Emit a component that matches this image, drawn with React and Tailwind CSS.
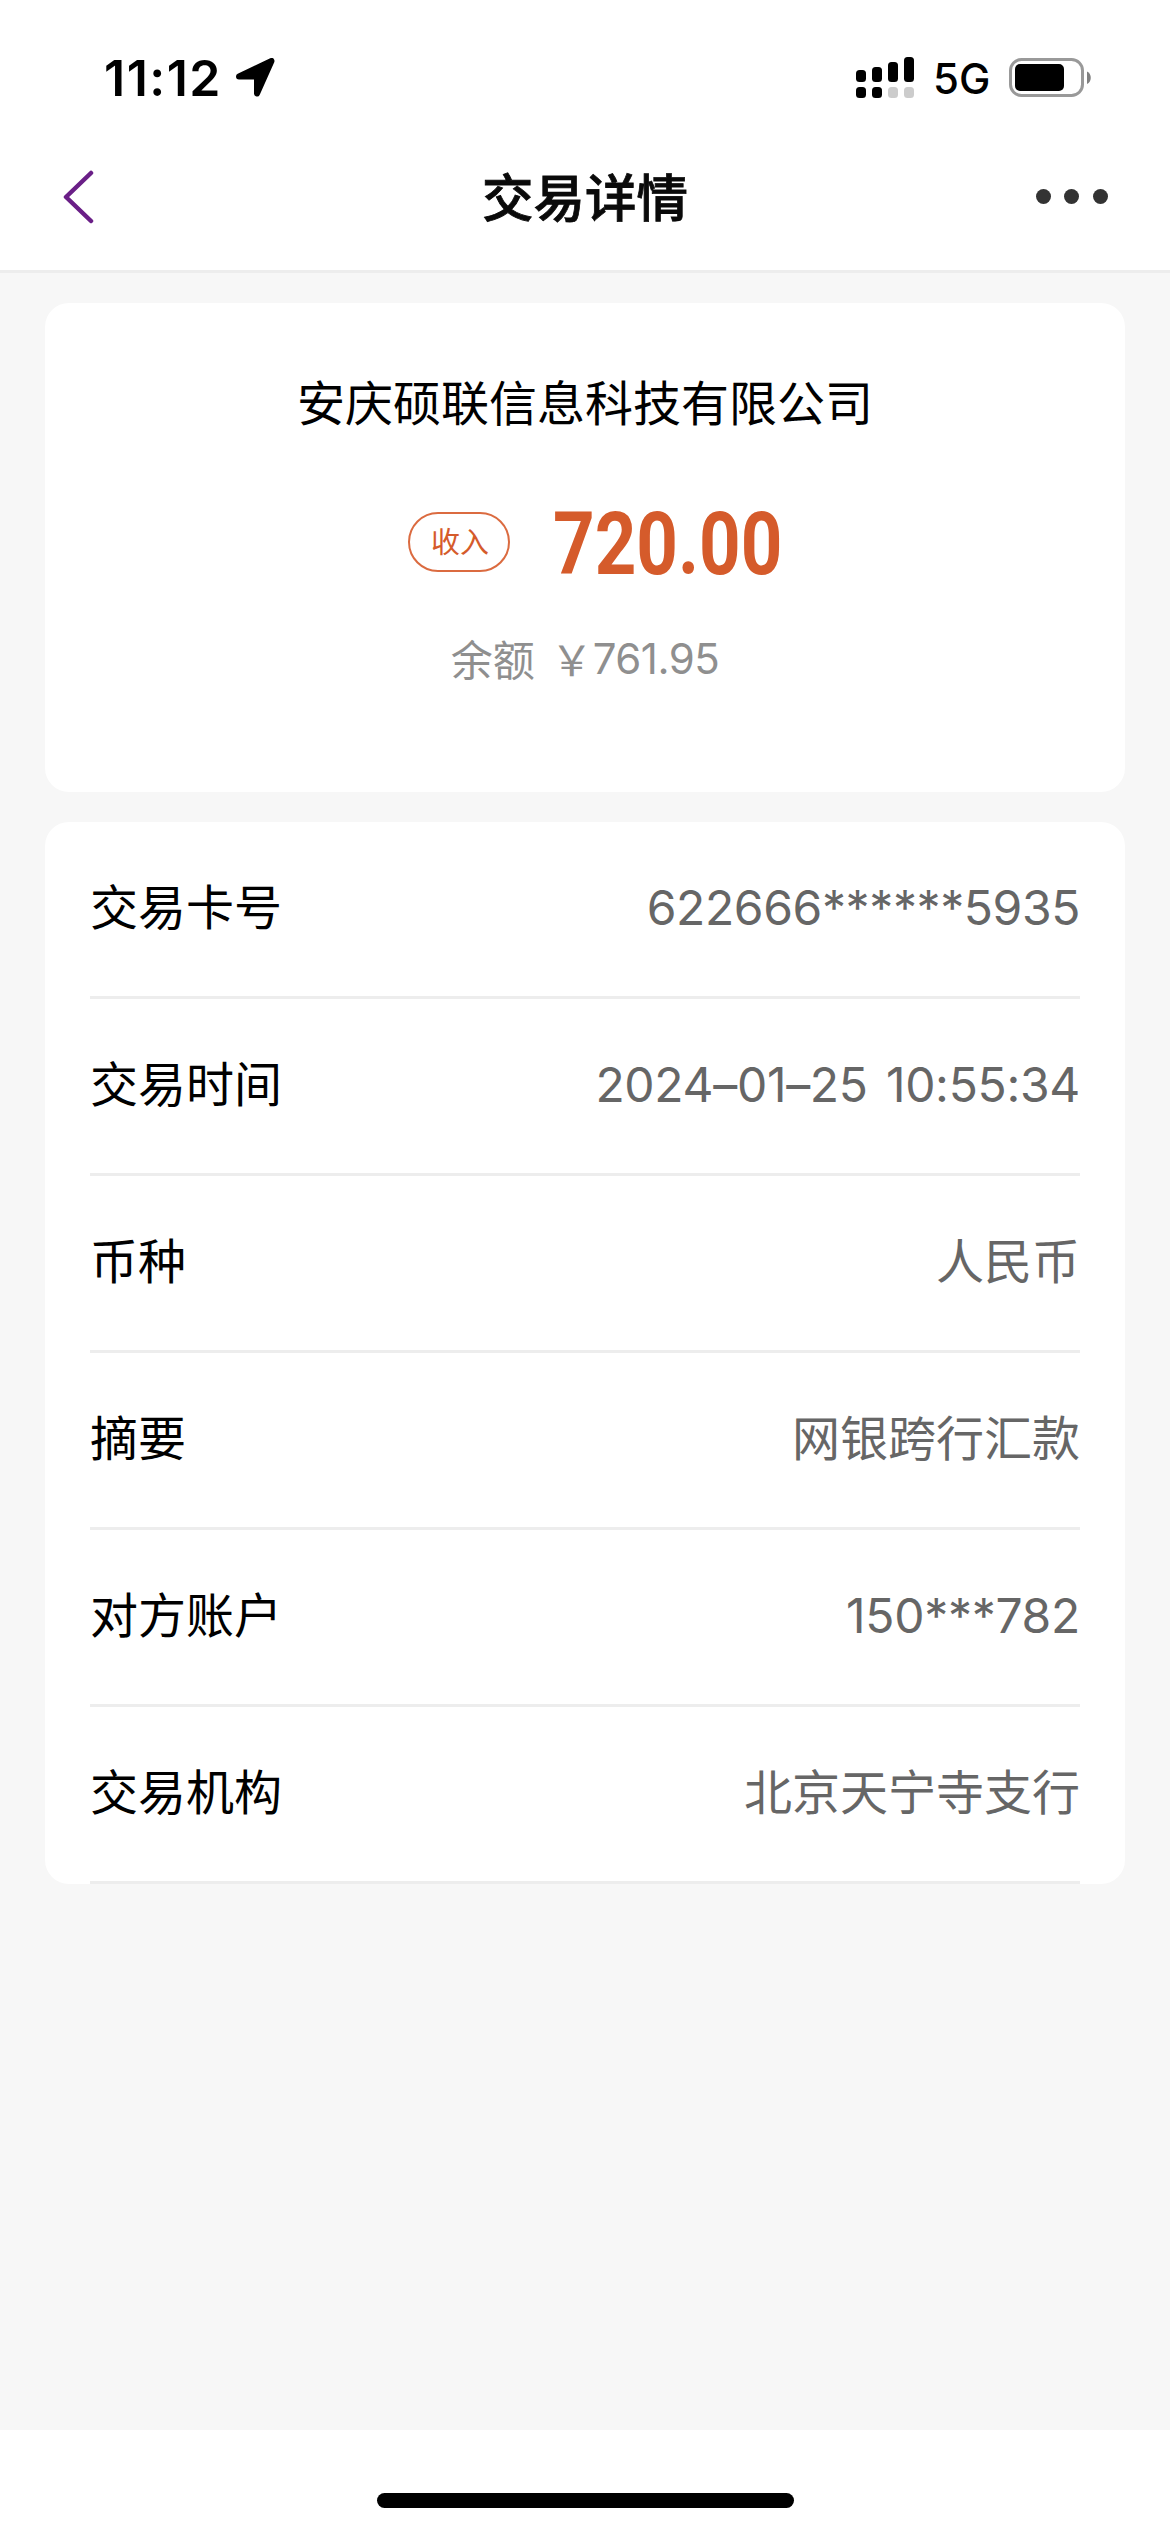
import React from 'react';

const rows = [
  { label: '交易卡号', value: '622666******5935', latin: 'tracking-[-0.4px]' },
  { label: '交易时间', value: '2024–01–25 10:55:34', latin: 'tracking-[-0.3px] [word-spacing:5px]' },
  { label: '币种', value: '人民币' },
  { label: '摘要', value: '网银跨行汇款' },
  { label: '对方账户', value: '150***782', latin: 'tracking-[-0.3px]' },
  { label: '交易机构', value: '北京天宁寺支行' }
];

const LocationIcon = () => (
  <svg className="ml-[14px] h-[39px] w-[39px]" viewBox="0 0 39 39">
    <path
      d="M3 18.5 35.5 3 21 35.5V18.5Z"
      fill="#000"
      stroke="#000"
      strokeWidth="6"
      strokeLinejoin="round"
    />
  </svg>
);

// Dual SIM signal: bars for the main line, dots for the second one
const SignalIcon = () => (
  <svg className="h-[41px] w-[58px]" viewBox="0 0 58 41">
    <rect x="0" y="13" width="10" height="12" rx="3.5" />
    <rect x="16" y="10" width="10" height="15" rx="3.5" />
    <rect x="32" y="5" width="10" height="20" rx="3.5" />
    <rect x="48" y="0" width="10" height="25" rx="3.5" />
    <rect x="0" y="30" width="10" height="11" rx="3.5" />
    <rect x="16" y="30" width="10" height="11" rx="3.5" />
    <rect x="32" y="30" width="10" height="11" rx="3.5" fill="#ccc" />
    <rect x="48" y="30" width="10" height="11" rx="3.5" fill="#ccc" />
  </svg>
);

const BatteryIcon = () => (
  <svg className="h-[39px] w-[82px]" viewBox="0 0 82 39">
    <rect x="1.5" y="1.5" width="72" height="36" rx="11" fill="none" stroke="#999" strokeWidth="3" />
    <rect x="6" y="6" width="49" height="27" rx="5" />
    <path d="M78 13.5c5 2 5 10.5 0 12.5z" fill="#808080" />
  </svg>
);

const StatusBar = () => (
  <div className="flex h-[126px] items-start justify-between pl-[104px] pr-[79px] pt-[57px] font-['Inter',sans-serif] text-black">
    <div className="flex h-[41px] items-center">
      <span className="text-[50px] font-semibold leading-none tracking-[1.5px]">11:12</span>
      <LocationIcon />
    </div>
    <div className="flex h-[41px] items-center">
      <SignalIcon />
      <span className="ml-[19px] w-[76px] pt-[3px] text-[42px] font-medium leading-none">5G</span>
      <BatteryIcon />
    </div>
  </div>
);

const NavBar = () => (
  <div className="grid h-[147px] grid-cols-3 items-center border-b-3 border-[#ededed] pb-[3px] pl-[62px] pr-[62px]">
    <svg className="h-[54px] w-[34px]" viewBox="0 0 34 54">
      <path
        d="M29 3 4 27 29 51"
        fill="none"
        stroke="#6a1f87"
        strokeWidth="4.5"
        strokeLinecap="round"
        strokeLinejoin="round"
      />
    </svg>
    <h1 className="pb-[3px] text-center text-[51.5px] font-medium leading-none text-[#0a0a0a] [-webkit-text-stroke:0.8px_#0a0a0a]">
      交易详情
    </h1>
    <div className="flex justify-end gap-[13.5px]">
      <i className="size-[15px] rounded-full bg-[#333]" />
      <i className="size-[15px] rounded-full bg-[#333]" />
      <i className="size-[15px] rounded-full bg-[#333]" />
    </div>
  </div>
);

const Summary = () => (
  <section className="flex h-[489px] flex-col items-center rounded-[24px] bg-white pt-[73px]">
    <p className="text-[48px] leading-[48px] text-black">安庆硕联信息科技有限公司</p>
    <div className="mt-[84px] flex h-[68px] w-[370px] translate-x-[8px] items-center text-[#d55b2b]">
      <span className="flex h-[60px] w-[102px] items-center justify-center rounded-[30px] border-2 border-[#db6b40] pb-[3px] pl-[2px] text-[29px] leading-none">
        收入
      </span>
      <span className="ml-[43px] w-[224px] origin-left scale-x-[0.825] whitespace-nowrap pt-[3px] font-['Roboto',sans-serif] text-[88px] font-bold leading-none">
        720.00
      </span>
    </div>
    <p className="mt-[58px] flex h-[48px] items-center text-[42px] leading-none text-[#8f8f8f]">
      <span>余额</span>
      <span className="ml-[16px]">￥</span>
      <span className="pt-[2px] font-['Inter',sans-serif] font-[370] tracking-[-0.5px]">761.95</span>
    </p>
  </section>
);

const DetailRow = ({ label, value, latin }) => (
  <div className="flex h-[177px] items-center justify-between border-b-3 border-[#ededed] text-[48px] leading-none">
    <span className="pb-[11px] text-black">{label}</span>
    {latin ? (
      <span className={`pb-[2px] font-['Inter',sans-serif] font-[370] text-[#666] ${latin}`}>{value}</span>
    ) : (
      <span className="pb-[11px] text-[#666]">{value}</span>
    )}
  </div>
);

const App = () => {
  return (
    <div className="flex h-[2532px] w-[1170px] flex-col bg-white font-['Noto_Sans_CJK_SC',sans-serif]">
      <StatusBar />
      <NavBar />
      <main className="flex flex-1 flex-col gap-[30px] bg-[#f7f7f7] px-[45px] pt-[30px]">
        <Summary />
        <section className="rounded-[24px] bg-white px-[45px]">
          {rows.map((row) => (
            <DetailRow key={row.label} {...row} />
          ))}
        </section>
      </main>
      <footer className="flex h-[102px] items-end justify-center pb-[24px]">
        <div className="h-[15px] w-[417px] rounded-full bg-black" />
      </footer>
    </div>
  );
};

export default App;
